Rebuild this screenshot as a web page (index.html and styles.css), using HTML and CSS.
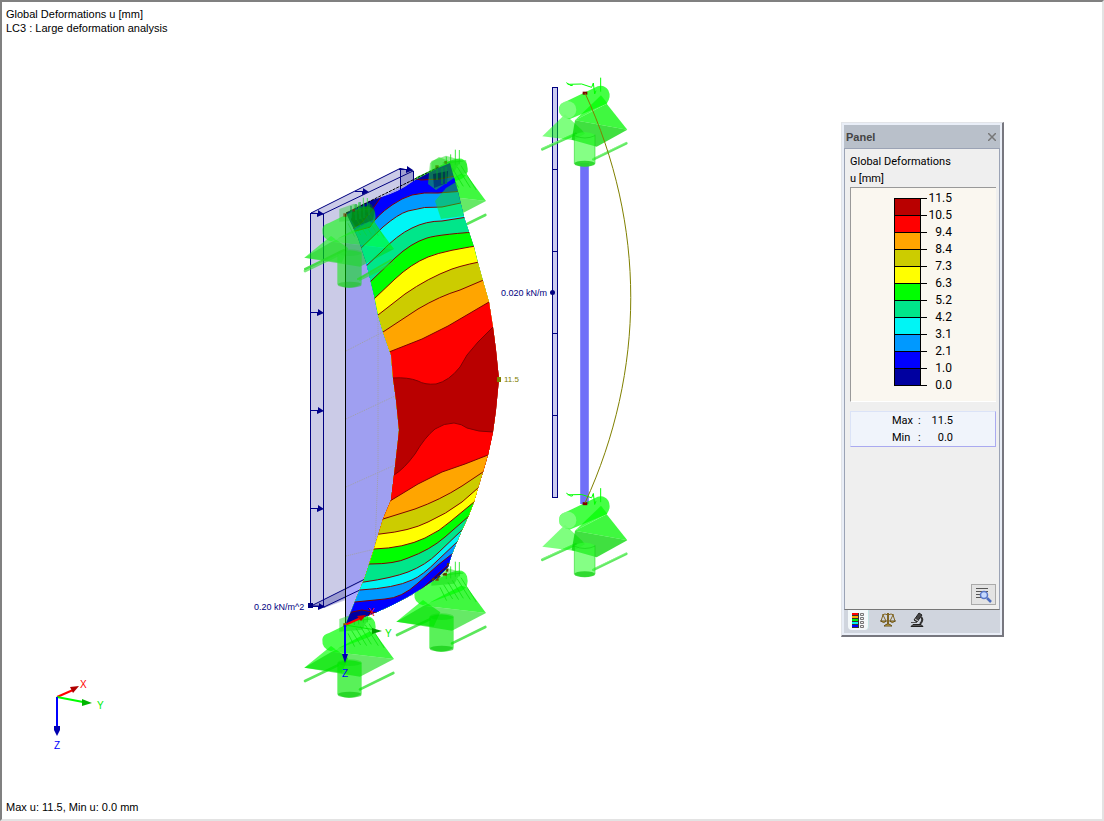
FILE: index.html
```html
<!DOCTYPE html>
<html lang="en">
<head>
<meta charset="utf-8">
<title>Global Deformations</title>
<link rel="stylesheet" href="styles.css">
</head>
<body>
<main class="workspace">
<svg class="model" viewBox="0 0 1104 821" preserveAspectRatio="xMinYMin meet" role="img" aria-label="Deformed model">
<defs>
<clipPath id="surface"><path d="M346 213L360 206L372 200Q392 195 405 187L417 179L438 168L450 163L458 192L464 217L469 232L474 247L478 263L483 281L489 302L493 327L496 350L499 379L496 410L493 432L488 455L483 472L478 488L474 502L469 515L462 530L457 542L452 554L448 567L437 578Q408 599 377 612L346 624L360 589L364 580L374 549L383 519L391 500L394 475L398 440L399 430L396 400L393 378L391 355L383 332L378 315L374 295L366 262L358 238Z"/></clipPath>
<g id="rods" fill="none" stroke-linecap="round"><path d="M-128 169L-28 123M25 199L124 151" stroke="#2fe02f" stroke-width="8" opacity=".75"/><path d="M-128 166L-28 120M25 196L124 148" stroke="#8f8" stroke-width="3" opacity=".7"/></g>
<g id="support-a">
<use href="#rods"/>
<path d="M-128 130L-60 64L-10 110L0 122L-34 142Z" fill="#0f0" opacity=".5"/>
<path d="M-30 82L127 110L35 161L-40 140Z" fill="#00d600" opacity=".75"/>
<path d="M-30 82L65 32L127 110Z" fill="#00f600" opacity=".75"/>
<path d="M-62 28L38 -20Q58 -26 70 -8Q80 12 65 32L-45 78Q-78 72 -78 50Q-78 32 -62 28Z" fill="#00ff00" opacity=".73"/>
<circle cx="-52" cy="50" r="26" fill="#8cff8c" opacity=".75"/>
<path d="M-30 82L48 7L67 31Z" fill="#0f0" opacity=".7"/>
<path d="M-32 125V212Q0 229 30 212V125Q0 109 -32 125Z" fill="#3f3" opacity=".6"/><ellipse cx="-1" cy="212" rx="31" ry="9" fill="#22d322" opacity=".85"/>
<path d="M-32 125V212M30 125V212M-32 128Q0 142 30 128" fill="none" stroke="#1c1" stroke-width="3" opacity=".5"/>
<path d="M-56 -31L-42 -22L-36 -24M-52 -26L-10 -27L20 -17L25 -30L29 3L33 -7M47 -46V-4" fill="none" stroke="#0f0" stroke-width="3"/>
<path d="M-7 -4H7V5H-7Z" fill="#7d0000"/>
</g>
<g id="support-b">
<path d="M-120 168L-22 121M45 193L145 144" stroke="#25df25" stroke-width="8" stroke-linecap="round" opacity=".75"/>
<path d="M-122 128L-42 63L10 100L-10 143Z" fill="#0f0" opacity=".65"/>
<path d="M-40 80L147 102L45 155L-122 128Z" fill="#00db00" opacity=".6"/>
<path d="M-40 80L72 20L90 25L147 102Z" fill="#00f600" opacity=".75"/>
<path d="M-48 24L43 -20Q80 -36 90 -8Q98 23 75 35L-42 79Q-70 72 -68 43Q-66 28 -48 24Z" fill="#0f0" opacity=".7"/>
<path d="M-23 113V208Q12 229 50 206V113Q14 98 -23 113Z" fill="#00ea00" opacity=".65"/>
<ellipse cx="14" cy="209" rx="36" ry="9" fill="#0cca0c" opacity=".65"/><ellipse cx="14" cy="113" rx="36" ry="10" fill="#0d0" opacity=".35"/>
<path d="M-17 -18L27 -34L72 -21L52 14L-17 20Z" fill="#0ad40a" opacity=".45"/>
<path d="M20 17L47 60M33 10L65 62M46 4L79 58M61 0L100 62M72 -4L118 69M9 25L29 65M28 -31V0M41 -38V-2M55 -52V-7M67 -51V-8M17 -12L79 -18" fill="none" stroke="#0ce30c" stroke-width="3" opacity=".8"/>
<path d="M-5 -5H5V5H-5ZM22 -18H30V-10H22Z" fill="#665800"/>
</g>
<path id="load-arrow" d="M0 0H8V-3L14 1L7 4V1H0Z" fill="#00008b"/>
</defs>

<g class="surface-load">
<path d="M311 213L400 168L413 171V182L346 214V600L324 608L311 606Z" fill="#cbcbe7"/>
<path d="M346 214L413 181L413 595L346 622Z" fill="#9f9ff1"/>
<path d="M400 168L413 171V183L400 190Z" fill="#9e9ed0"/>
<path d="M311 606L365 579V590L324 608Z" fill="#9d9dd0"/>
<path d="M346 590L363 581L348 621H346Z" fill="#aaaaff"/>
<path d="M346 351L383 332M346 419L395 396M346 487L395 465M346 556L375 549M376 298L378 315V470L375 549" fill="none" stroke="#a0a0a8" stroke-dasharray="1 1"/>
<path d="M310.500 213V606M323.500 214V607M311 213L400 168.500L413.500 171V182M311 213L323 214L413 171M400.500 168V190M311 606L365 579M324 607L362 589M311 606H324" fill="none" stroke="#000080"/>
<use href="#load-arrow" x="310" y="213"/><use href="#load-arrow" x="310" y="312"/><use href="#load-arrow" x="310" y="410"/><use href="#load-arrow" x="310" y="508"/><use href="#load-arrow" x="311" y="606"/><use href="#load-arrow" x="355" y="191"/><use href="#load-arrow" x="399" y="169"/>
<rect x="308" y="603" width="5" height="5" fill="#000080"/>
<path d="M345.500 214V623" stroke="#000"/>
</g>

<use href="#support-b" transform="translate(437 167) scale(.3333)"/>
<use href="#support-b" transform="translate(437 579) scale(.3333)"/>
<use href="#support-b" transform="translate(345 625) scale(.3333)"/>

<g clip-path="url(#surface)">
<path d="M330 150H520V640H330Z" fill="#0000a0"/>
<g class="bands">
<path fill="#0000ff" d="M340 238L362 222L372 210L381 197L412 178L421 180L440 179L465 174V700H320Z"/>
<path fill="#0099ff" d="M340 237L352 232L370 227Q376 216 392 205Q402 198 412 195Q424 192 438 193L465 191L510 700H320Z"/>
<path fill="#00f5f5" d="M345 262L358 251L383 227Q398 214 408 211Q424 206 442 207L470 201V700H320Z"/>
<path fill="#00e68a" d="M350 280L364 268L380 253Q397 235 412 228Q426 221 442 221L480 215V700H320Z"/>
<path fill="#00ff00" d="M350 302L370 282L395 258Q411 243 427 238Q440 234 490 231V700H320Z"/>
<path fill="#ffff00" d="M360 310L375 298L395 279Q411 264 428 257Q445 250 490 244V700H320Z"/>
<path fill="#cccc00" d="M360 328L378 315L405 294Q428 278 452 269Q466 264 495 259V700H320Z"/>
<path fill="#ffa500" d="M360 346L383 332L418 309Q440 296 460 290L500 273V700H320Z"/>
<path fill="#ff0000" d="M370 360L389 352L422 339L448 326L489 302L510 288V700H320Z"/>
<path fill="#b90000" d="M370 378H393Q408 377 418 381Q425 385 436 384Q449 381 460 367L467 355L478 342L493 327L510 310V700H320Z"/>
<path fill="#ff0000" d="M380 483L394 475Q404 469 415 454Q425 437 435 429Q444 423 454 423Q462 424 467 428Q478 432 493 432H520V700H320Z"/>
<path fill="#ffa500" d="M370 511L390 501L418 484L442 472L465 464L488 455L520 443V700H320Z"/>
<path fill="#cccc00" d="M360 526L383 519L415 509Q440 500 462 486L483 472L510 455V700H320Z"/>
<path fill="#ffff00" d="M360 537L380 534Q410 531 428 522Q446 514 462 502L478 488L500 468V700H320Z"/>
<path fill="#00ff00" d="M350 551L374 549Q404 548 425 538Q440 531 451 521L474 502L500 480V700H320Z"/>
<path fill="#00e68a" d="M350 565L370 564Q395 564 408 558Q430 550 445 537L469 516L500 489V700H320Z"/>
<path fill="#00f5f5" d="M350 583L364 582Q392 578 408 572Q426 565 438 553L462 530L490 503V700H320Z"/>
<path fill="#0099ff" d="M345 592L360 590Q395 588 412 580Q422 576 438 560L457 542L480 520V700H320Z"/>
<path fill="#0000ff" d="M340 606L355 602L385 599Q402 598 418 583L438 565L452 554L480 532V700H320Z"/>
<path fill="#0000a0" d="M335 625L352 612L362 610L377 613L390 614L425 586L440 572L452 562L480 540V700H320Z"/>
</g>
</g>
<path d="M346 213L439 167" stroke="#000" stroke-dasharray="3 1"/>

<use href="#support-b" transform="translate(345 215) scale(.3333)" opacity=".8"/>
<g fill="#17df17" opacity=".5">
<path d="M430 163L439 157L449 161L466 160L468 172L454 178L436 190L428 184Z"/>
<path d="M435 201L446 188L456 182L464 216L441 219Z"/>
<path d="M433 174L448 171L447 183L434 188Z" fill="#007c00"/>
<path d="M352 212L371 204L375 210L373 220L355 227L351 220Z" fill="#007c00"/>
</g>
<path d="M305 269L344 250M358 279L391 260" stroke="#26dd26" stroke-width="2" stroke-linecap="round" opacity=".8"/>
<path d="M351 206V218M356 204V220M360 202V219M364 204V218M369 203V215M437 169V180M442 168V184M446 167V184" stroke="#009b35"/>
<path d="M432 580L447 573L448 563" fill="none" stroke="#5c3a00" stroke-width="2" stroke-dasharray="3 3"/>
<rect x="497" y="377" width="4" height="5" fill="#808000"/>

<g class="local-axes">
<path d="M345 625L363 617" stroke="#f00" stroke-width="2"/><path d="M366 615L357 616L361 621Z" fill="#c00"/>
<path d="M345 625L376 630" stroke="#0e0"/><path d="M382 631L372 628V634Z" fill="#00a000"/>
<path d="M345 625V656" stroke="#00f" stroke-width="2"/><path d="M342 654H348L345 663Z" fill="#0000ad"/>
</g>

<g class="beam">
<rect x="552.500" y="87.500" width="5" height="410" fill="#ccccf0" stroke="#000080"/>
<path d="M552 169.500H558M552 251.500H558M552 333.500H558M552 415.500H558" stroke="#000080"/>
<circle cx="552.500" cy="292.500" r="2.500" fill="#000080"/>
<rect x="580" y="163" width="9" height="341" fill="#7070f8"/><path d="M580.500 163V504M588.500 163V504" stroke="#8b8bfa"/>
<use href="#support-a" transform="translate(585 93) scale(.3333)"/>
<use href="#support-a" transform="translate(585 503.500) scale(.3333)"/>
<path d="M585 93C646 225 646 370 585 503" fill="none" stroke="#808000"/>
</g>

<g class="global-axes">
<path d="M57 697L73 690" stroke="#f00" stroke-width="2"/><path d="M79 686L70 687L73 693Z" fill="#b00000"/>
<path d="M57 697L83 702" stroke="#0f0" stroke-width="2"/><path d="M92 703L82 699V706Z" fill="#00b400"/>
<path d="M57 697V728" stroke="#00f" stroke-width="2"/><path d="M54 726H60V730L57 736L54 730Z" fill="#0000b0"/>
</g>

<g class="label">
<text x="254" y="610" class="load-text">0.20 kN/m^2</text>
<text x="501" y="296" class="load-text">0.020 kN/m</text>
<text x="504" y="382" class="peak-text">11.5</text>
<text x="80" y="688" class="axis-x">X</text><text x="97" y="709" class="axis-y">Y</text><text x="54" y="749" class="axis-z">Z</text>
<text x="368" y="616" class="axis-x">X</text><text x="385" y="637" class="axis-y">Y</text><text x="342" y="677" class="axis-z">Z</text>
</g>
</svg>

<header class="caption">
<div>Global Deformations u [mm]</div>
<div>LC3 : Large deformation analysis</div>
</header>
<footer class="caption">Max u: 11.5, Min u: 0.0 mm</footer>

<aside class="panel" aria-label="Panel">
<div class="panel-title"><h2>Panel</h2>
<button class="close" aria-label="Close"><svg width="8" height="8" viewBox="0 0 8 8"><path d="M0 0L8 8M8 0L0 8" stroke="#777" stroke-width="1.500"/></svg></button></div>
<div class="panel-body">
<div class="heading">Global Deformations</div>
<div class="heading">u [mm]</div>
<div class="legend">
<div class="scale"><i class="c11"></i><i class="c10"></i><i class="c9"></i><i class="c8"></i><i class="c7"></i><i class="c6"></i><i class="c5"></i><i class="c4"></i><i class="c3"></i><i class="c2"></i><i class="c1"></i></div>
<ul class="ticks"><li>11.5</li><li>10.5</li><li>9.4</li><li>8.4</li><li>7.3</li><li>6.3</li><li>5.2</li><li>4.2</li><li>3.1</li><li>2.1</li><li>1.0</li><li>0.0</li></ul>
</div>
<dl class="range"><dt>Max</dt><dd class="colon">:</dd><dd>11.5</dd><dt>Min</dt><dd class="colon">:</dd><dd>0.0</dd></dl>
<button class="details" aria-label="Details"><svg width="18" height="18" viewBox="0 0 18 18"><path d="M1 2.500H13M1 5.500H13M1 8.500H8M1 11.500H7" stroke="#555"/><circle cx="9" cy="9" r="3.500" fill="#c5d9ff" stroke="#5877c8" stroke-width="1.500"/><path d="M12 12L16 16" stroke="#4d6dbf" stroke-width="2.500"/></svg></button>
</div>
<nav class="tabs">
<button class="tab active" aria-label="Color scale"><svg width="14" height="17" viewBox="0 0 14 17"><path d="M1 1H8V16H1Z" fill="#333"/><path d="M1 1H7V3H1Z" fill="#f00"/><path d="M1 4H7V6H1Z" fill="#fa0"/><path d="M1 7H7V9H1Z" fill="#0e0"/><path d="M1 10H7V12H1Z" fill="#0ee"/><path d="M1 13H7V15H1Z" fill="#00f"/><path d="M9.500 1.500H12.500V3.500H9.500ZM9.500 5.500H12.500V7.500H9.500ZM9.500 9.500H12.500V11.500H9.500ZM9.500 13.500H12.500V15.500H9.500Z" fill="#eee" stroke="#777"/></svg></button>
<button class="tab" aria-label="Factors"><svg width="16" height="16" viewBox="0 0 16 16"><path d="M2 3Q5 1 8 3Q11 1 14 3M3 3L1 9M3 3L6 9M13 3L10 9M13 3L15 9" fill="none" stroke="#806522"/><path d="M8 1V12" stroke="#806522" stroke-width="2"/><path d="M.5 9H6.500Q4 12 .5 9ZM9.500 9H15.500Q12 12 9.500 9ZM4 14Q8 10 12 14Z" fill="#dabb51" stroke="#66501d"/></svg></button>
<button class="tab" aria-label="Filter"><svg width="16" height="16" viewBox="0 0 16 16"><path d="M10 1L13 3L8 10L5 8Z" fill="#444" stroke="#222"/><path d="M6 7L9 9" stroke="#ccc"/><path d="M12 5Q15 8 11 12" fill="none" stroke="#333" stroke-width="2"/><path d="M2 10.500H8" stroke="#555"/><path d="M2 14.500L4 12.500H12L14 14.500Z" fill="#555" stroke="#222"/></svg></button>
</nav>
</aside>
</main>
</body>
</html>
```
FILE: styles.css
```css
* { box-sizing: border-box; }
body { margin: 0; background: #fff; color: #000; font: 11px/14px "Liberation Sans", Arial, sans-serif; }
.workspace { position: relative; min-height: 100vh; display: flex; flex-direction: column; justify-content: space-between; padding: 5px 4px; border: 2px solid; border-color: #808080 #e3e3e3 #e3e3e3 #808080; background: #fff; }
.model { position: absolute; left: -2px; top: -2px; width: 100vw; height: auto; }
.caption { position: relative; }
.bands path { stroke: #800000; stroke-width: 1; }
.label text { font-family: "Liberation Sans", Arial, sans-serif; font-size: 10px; }
.label .load-text { fill: #000080; font-size: 9px; }
.label .peak-text { fill: #808000; font-size: 8px; }
.axis-x { fill: #f00; }
.axis-y { fill: #0e0; }
.axis-z { fill: #00f; }
button { margin: 0; padding: 0; border: 0; background: none; font: inherit; }
button svg { display: block; }
.panel { position: absolute; top: 120px; right: 98px; width: 163px; height: 515px; display: flex; flex-direction: column; padding: 2px; background: #e9eef7; border: 1px solid #e2e4e8; border-right: 2px solid #77777f; border-bottom: 2px solid #77777f; font-family: Roboto, sans-serif; font-size: 11px; }
.panel-title { display: flex; align-items: center; justify-content: space-between; height: 23px; padding: 0 4px 0 2px; background: #b9c0ca; }
.panel-title h2 { margin: 0; color: #444; font: bold 11px/14px "Liberation Sans", Arial, sans-serif; }
.panel-body { flex: 1; display: flex; flex-direction: column; padding: 4px 3px 4px 5px; background: #efefef; border: 1px solid #9ba3b5; border-bottom-color: #777; }
.heading { line-height: 17px; }
.legend { display: flex; height: 215px; padding: 2px 0 0 43px; background: #faf7f0; border-left: 1px solid #999; border-top: 1px solid #999; border-bottom: 1px solid #fff; }
.scale { width: 27px; margin-top: 8px; }
.scale i { display: block; height: 17px; border: 1px solid #000; border-bottom: 0; }
.scale .c1 { height: 18px; border-bottom: 1px solid #000; }
.c11 { background: #b90000; } .c10 { background: #f00; } .c9 { background: #ffa500; } .c8 { background: #cccc00; } .c7 { background: #ff0; } .c6 { background: #0f0; } .c5 { background: #00e68a; } .c4 { background: #00f5f5; } .c3 { background: #0099ff; } .c2 { background: #00f; } .c1 { background: #0000a0; }
.ticks { list-style: none; width: 31px; margin: 0; padding: 0; font-size: 12px; line-height: 17px; }
.ticks li { display: flex; align-items: center; justify-content: space-between; height: 17px; }
.ticks li::before { content: ""; width: 6px; height: 1px; background: #000; }
.range { display: grid; grid-template-columns: 26px 10px 25px; align-content: center; height: 36px; margin: 9px 0 0; padding-left: 41px; background: #f0f4fb; border: 1px solid #dbe3f7; border-right-color: #aaaaf0; border-bottom-color: #aaaaf0; line-height: 17px; }
.range dd { margin: 0; text-align: right; }
.range .colon { text-align: left; }
.details { display: flex; align-items: center; justify-content: center; width: 25px; height: 21px; margin: auto 0 0 auto; background: #e3e3e3; border: 1px solid #aaa; }
.tabs { display: flex; height: 23px; padding-left: 4px; gap: 8px; background: #d0d5de; }
.tab { width: 21px; height: 20px; display: flex; align-items: center; justify-content: center; }
.tab.active { background: #f3f8fa; border-right: 1px solid #c2e4e4; border-radius: 0 0 4px 4px; }
```
